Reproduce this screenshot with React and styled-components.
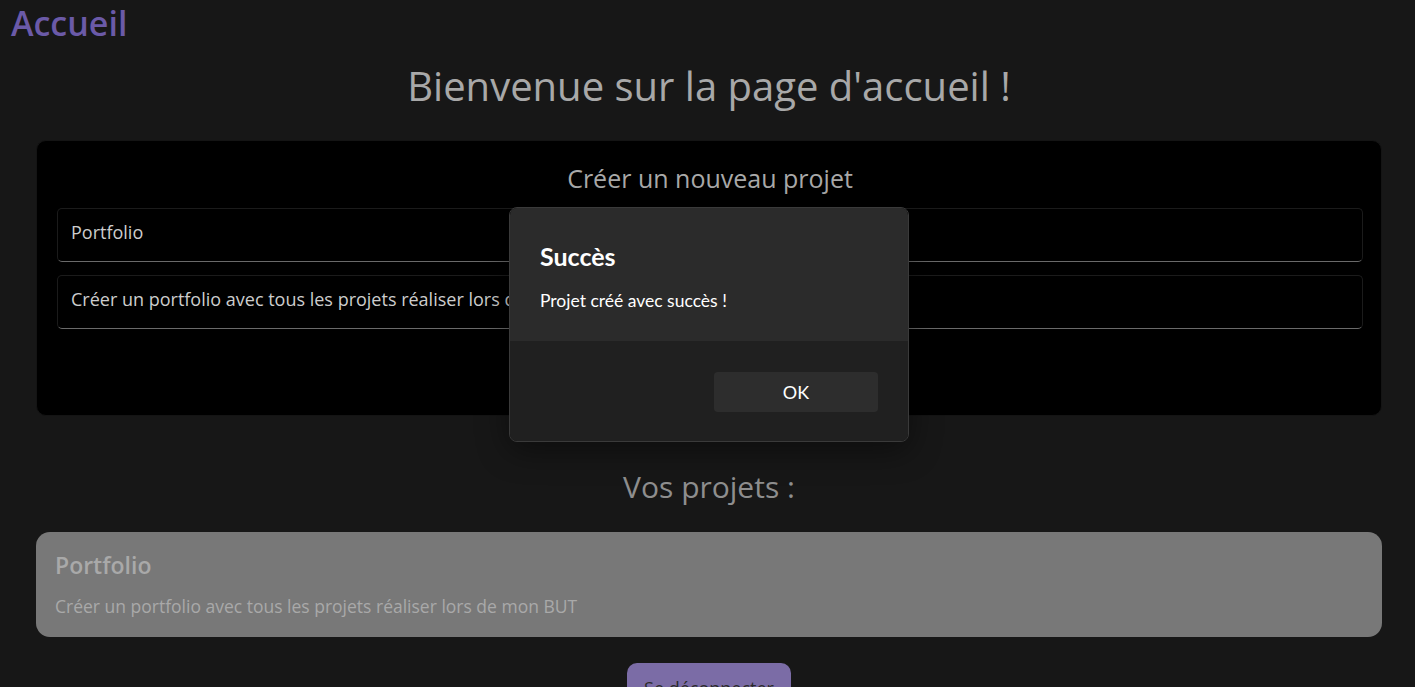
import React from "react";
import styled, { createGlobalStyle } from "styled-components";

const Global = createGlobalStyle`
  html, body { margin: 0; padding: 0; background: #171717; overflow: hidden; }
  body { font-family: "Open Sans", "Noto Sans", sans-serif; }
  * { box-sizing: border-box; }
`;

const Page = styled.div`
  min-height: 687px;
  background: #171717;
`;

const Brand = styled.h1`
  margin: 0;
  padding-left: 11px;
  font-size: 34px;
  line-height: 46px;
  font-weight: 600;
  color: #6b5aa8;
`;

const Main = styled.main`
  width: 1346px;
  margin-left: 36px;
  display: flex;
  flex-direction: column;
  align-items: center;
`;

const Welcome = styled.h2`
  margin: 12px 0 0;
  font-size: 40px;
  line-height: 56px;
  font-weight: 400;
  color: #a8a8a8;
  text-align: center;
`;

const FormCard = styled.section`
  align-self: stretch;
  margin: 26px 0 0 0;
  background: #000;
  border: 1px solid #141414;
  border-radius: 10px;
  padding: 20px 18px 26px 20px;
  display: flex;
  flex-direction: column;
  gap: 13px;
  align-items: stretch;
`;

const CardTitle = styled.h3`
  margin: 0;
  font-size: 25px;
  line-height: 34px;
  font-weight: 400;
  color: #a9a9a9;
  text-align: center;
`;

const Field = styled.div`
  height: 54px;
  background: #000;
  border: 1px solid #1b1b1b;
  border-bottom: 1px solid #6a6a6a;
  border-radius: 5px;
  display: flex;
  align-items: center;
  padding: 0 13px 6px;
  font-size: 18px;
  color: #cdcdcd;
  white-space: nowrap;
  overflow: hidden;
`;

const SubmitButton = styled.button`
  align-self: center;
  margin-top: 7px;
  height: 40px;
  padding: 0 24px;
  border: none;
  border-radius: 10px;
  background: #7b6ca6;
  color: #2a2a2a;
  font-family: inherit;
  font-size: 18px;
`;

const SectionTitle = styled.h2`
  margin: 51px 0 0;
  font-size: 30px;
  line-height: 40px;
  font-weight: 400;
  color: #8e8e8e;
  text-align: center;
`;

const ProjectCard = styled.article`
  align-self: stretch;
  margin-top: 25px;
  background: #787878;
  border-radius: 14px;
  padding: 17px 19px 18px;
  display: flex;
  flex-direction: column;
  gap: 12px;
`;

const ProjectName = styled.h4`
  margin: 0;
  font-size: 23px;
  line-height: 32px;
  font-weight: 600;
  color: #a9a9a9;
`;

const ProjectDesc = styled.p`
  margin: 0;
  font-size: 17.5px;
  line-height: 26px;
  color: #a9a9a9;
`;

const LogoutButton = styled.button`
  margin-top: 26px;
  padding: 12px 17px;
  border: none;
  border-radius: 10px;
  background: #7b6ca6;
  color: #2b2b2b;
  font-family: inherit;
  font-size: 18px;
  line-height: 26px;
`;

const Dialog = styled.div`
  position: fixed;
  left: 509px;
  top: 207px;
  width: 400px;
  height: 235px;
  border: 1px solid #3a3a3a;
  border-radius: 8px;
  overflow: hidden;
  box-shadow: 0 8px 32px rgba(0, 0, 0, 0.45);
  display: flex;
  flex-direction: column;
  font-family: "Lato", "Noto Sans", sans-serif;
`;

const DialogBody = styled.div`
  height: 133px;
  background: #2b2b2b;
  padding: 32px 30px 0;
  display: flex;
  flex-direction: column;
  gap: 18px;
`;

const DialogTitle = styled.div`
  font-size: 25px;
  line-height: 32px;
  font-weight: 700;
  color: #ffffff;
`;

const DialogText = styled.div`
  font-size: 17.5px;
  line-height: 22px;
  color: #ffffff;
`;

const DialogFooter = styled.div`
  flex: 1;
  background: #202020;
  display: flex;
  justify-content: flex-end;
  align-items: flex-start;
  padding: 31px 30px 0;
`;

const DialogButton = styled.button`
  width: 164px;
  height: 40px;
  border: none;
  border-radius: 4px;
  background: #2d2d2d;
  color: #ffffff;
  font-family: "Lato", "Noto Sans", sans-serif;
  font-size: 18px;
`;

export default function App() {
  return (
    <Page>
      <Global />
      <Brand>Accueil</Brand>
      <Main>
        <Welcome>Bienvenue sur la page d'accueil !</Welcome>
        <FormCard>
          <CardTitle>Créer un nouveau projet</CardTitle>
          <Field>Portfolio</Field>
          <Field>Créer un portfolio avec tous les projets réaliser lors de mon BUT</Field>
          <SubmitButton>Créer</SubmitButton>
        </FormCard>
        <SectionTitle>Vos projets :</SectionTitle>
        <ProjectCard>
          <ProjectName>Portfolio</ProjectName>
          <ProjectDesc>Créer un portfolio avec tous les projets réaliser lors de mon BUT</ProjectDesc>
        </ProjectCard>
        <LogoutButton>Se déconnecter</LogoutButton>
      </Main>
      <Dialog role="dialog">
        <DialogBody>
          <DialogTitle>Succès</DialogTitle>
          <DialogText>Projet créé avec succès !</DialogText>
        </DialogBody>
        <DialogFooter>
          <DialogButton>OK</DialogButton>
        </DialogFooter>
      </Dialog>
    </Page>
  );
}
